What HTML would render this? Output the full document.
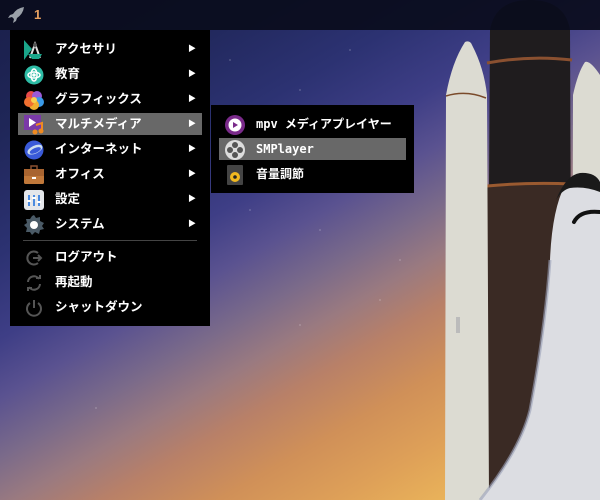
<!DOCTYPE html>
<html><head><meta charset="utf-8">
<style>
*{margin:0;padding:0;box-sizing:border-box}
body{width:600px;height:500px;overflow:hidden;position:relative;font-family:"Liberation Sans","Noto Sans CJK JP",sans-serif;
background:linear-gradient(150deg,#1a1f4a 0%,#1f2658 15%,#2c3272 30%,#3e3e86 40%,#5a5290 47%,#7a6a8a 54%,#9a7a80 60%,#b88068 66%,#d09058 74%,#dea058 82%,#eab45a 90%,#f2c460 100%);}
.bar{position:absolute;left:0;top:0;width:600px;height:30px;background:rgba(10,12,28,0.92)}
.bar .n{position:absolute;left:34px;top:7px;color:#e8a060;font-size:13px;font-weight:bold}
.menu{position:absolute;background:#000;color:#fff;font-weight:bold;font-size:12.5px}
.item{position:absolute;left:8px;height:22px;line-height:22px;width:184px}
.item .t{position:absolute;left:37px;top:0}
.item .a{position:absolute;right:6px;top:0;font-size:8px}
.item svg{position:absolute;left:6px;top:2px}
.hl{background:#686868}
.sub{font-family:"DejaVu Sans Mono","Noto Sans CJK JP",monospace;font-size:12px}
</style></head><body>
<svg style="position:absolute;left:0;top:0" width="600" height="500">
 <g fill="#fff" opacity="0.5"><circle cx="230" cy="60" r="0.6"/><circle cx="300" cy="90" r="0.6"/><circle cx="350" cy="50" r="0.6"/><circle cx="250" cy="210" r="0.6"/><circle cx="320" cy="230" r="0.6"/><circle cx="400" cy="260" r="0.6"/><circle cx="96" cy="408" r="0.6"/><circle cx="380" cy="300" r="0.6"/><circle cx="300" cy="325" r="0.6"/></g>
 <path d="M490 30 Q495 0 530 0 Q565 0 570 30 L572 500 L487 500 Z" fill="#1f1c1e"/>
 <path d="M487 186 Q530 182 572 184 L572 500 L487 500 Z" fill="#3a2a24"/>
 <path d="M487 186 Q530 182 572 184" stroke="#9a5a30" stroke-width="3" fill="none"/>
 <path d="M487 63 Q530 55 572 60" stroke="#8a5030" stroke-width="3" fill="none"/>
 <path d="M445 500 L446 95 Q452 62 465 42 Q470 40 472 45 Q484 68 487 95 L489 500 Z" fill="#dcdbd2"/>
 <path d="M446 96 Q466 90 486 98" stroke="#7a4a2a" stroke-width="1.5" fill="none"/>
 <rect x="456" y="317" width="4" height="16" fill="#bbb"/>
 <path d="M572 500 L573 95 Q578 72 585 62 Q590 60 600 75 L600 500 Z" fill="#dcdbd2"/>
 <path d="M600 180 Q578 172 565 185 Q552 210 550 260 Q545 330 530 410 Q520 450 480 500 L600 500 Z" fill="#dcdde2"/>
 <path d="M556 200 Q566 175 580 173 Q595 172 600 182 L600 192 Q585 186 570 188 Q562 190 556 200 Z" fill="#1a1a1a"/>
 <path d="M574 222 Q580 210 600 212" stroke="#111" stroke-width="4" fill="none" stroke-linecap="round"/>
 <path d="M550 260 Q545 330 530 410 Q520 450 480 500" stroke="#9aa0b8" stroke-width="3" fill="none" opacity="0.6"/>
</svg>
<div class="bar">
 <svg style="position:absolute;left:6px;top:5px" width="20" height="20" viewBox="0 0 20 20"><path d="M18 2 Q11 3 7 9 L4 10 L2 13 L6 12 L8 14 L7 18 L10 16 L11 13 Q17 9 18 2Z" fill="#9aa0a8"/></svg>
 <span class="n">1</span>
</div>
<div class="menu" style="left:10px;top:30px;width:200px;height:296px">
 <div class="item" style="top:8px"><svg width="20" height="20" viewBox="0 0 20 20"><path d="M0 0 L8 9 L0 20Z" fill="#1aa58a"/><path d="M6 18 L11 4 L16 18" stroke="#ddd" stroke-width="2" fill="none"/><circle cx="11" cy="5" r="2" fill="#555"/><path d="M4 14 L18 14 L15 19 L8 19Z" fill="#1aa58a"/></svg><span class="t">アクセサリ</span><span class="a">▶</span></div>
 <div class="item" style="top:33px"><svg width="20" height="20"><circle cx="10" cy="10" r="9.5" fill="#2ebca6"/><ellipse cx="10" cy="10" rx="6" ry="3" stroke="#fff" stroke-width="1.5" fill="none"/><ellipse cx="10" cy="10" rx="3" ry="6" stroke="#fff" stroke-width="1.5" fill="none"/><circle cx="10" cy="10" r="1.8" fill="#fff"/></svg><span class="t">教育</span><span class="a">▶</span></div>
 <div class="item" style="top:58px"><svg width="20" height="20"><circle cx="7" cy="6" r="5" fill="#e84a4a"/><circle cx="13" cy="6" r="5" fill="#9a5ad8"/><circle cx="15" cy="12" r="5" fill="#3a9ae8"/><circle cx="10" cy="15" r="5" fill="#f0b030"/><circle cx="5" cy="12" r="5" fill="#f07030"/><circle cx="10" cy="10" r="3" fill="#f8d050"/></svg><span class="t">グラフィックス</span><span class="a">▶</span></div>
 <div class="item hl" style="top:83px"><svg width="20" height="20"><rect x="0" y="0" width="17" height="15" fill="#7a3aa8"/><path d="M5 3 L12 7.5 L5 12Z" fill="#fff"/><path d="M12 10 L18 8 L18 16" stroke="#f08a20" stroke-width="2" fill="none"/><circle cx="11" cy="17" r="2.5" fill="#f08a20"/><circle cx="17" cy="16" r="2.5" fill="#f08a20"/></svg><span class="t">マルチメディア</span><span class="a">▶</span></div>
 <div class="item" style="top:108px"><svg width="20" height="20"><circle cx="10" cy="10" r="9.5" fill="#3a5ad8"/><ellipse cx="11" cy="10" rx="8" ry="4" fill="#cde" transform="rotate(-25 10 10)"/><ellipse cx="11" cy="11" rx="6" ry="2.5" fill="#3a5ad8" transform="rotate(-25 10 10)"/></svg><span class="t">インターネット</span><span class="a">▶</span></div>
 <div class="item" style="top:133px"><svg width="20" height="20"><rect x="7" y="1" width="6" height="4" stroke="#8a5030" stroke-width="1.5" fill="none"/><rect x="0" y="4" width="20" height="15" rx="1.5" fill="#c0783a"/><rect x="0" y="4" width="20" height="7" fill="#a86430"/><rect x="8" y="12" width="4" height="2" fill="#fff"/></svg><span class="t">オフィス</span><span class="a">▶</span></div>
 <div class="item" style="top:158px"><svg width="20" height="20"><rect x="0" y="0" width="20" height="20" rx="3" fill="#e4e6ea"/><g stroke="#4a8ae0" stroke-width="2"><line x1="5" y1="5" x2="5" y2="16"/><line x1="10" y1="5" x2="10" y2="16"/><line x1="15" y1="5" x2="15" y2="16"/></g><g fill="#fff"><rect x="3" y="10" width="4" height="2"/><rect x="8" y="7" width="4" height="2"/><rect x="13" y="11" width="4" height="2"/></g></svg><span class="t">設定</span><span class="a">▶</span></div>
 <div class="item" style="top:183px"><svg width="20" height="20" viewBox="0 0 20 20"><path d="M10 0 L12 3 L16 2 L16 6 L20 8 L18 11 L20 14 L16 15 L15 19 L11 17 L8 20 L6 17 L2 17 L3 13 L0 10 L3 8 L2 4 L6 4 L8 1Z" fill="#4a5a66"/><circle cx="10" cy="10" r="4" fill="#fff"/></svg><span class="t">システム</span><span class="a">▶</span></div>
 <div style="position:absolute;left:13px;top:210px;width:174px;height:1px;background:#444"></div>
 <div class="item" style="top:216px"><svg width="20" height="20"><path d="M14 5 A6.5 6.5 0 1 0 14 15" stroke="#555" stroke-width="2" fill="none"/><path d="M9 10 L17 10 M14 7 L17 10 L14 13" stroke="#555" stroke-width="2" fill="none"/></svg><span class="t">ログアウト</span></div>
 <div class="item" style="top:241px"><svg width="20" height="20"><path d="M4 9 A6 6 0 0 1 15 6" stroke="#555" stroke-width="2" fill="none"/><path d="M16 11 A6 6 0 0 1 5 14" stroke="#555" stroke-width="2" fill="none"/><path d="M12 5 L16 5 L16 2" stroke="#555" stroke-width="2" fill="none"/><path d="M8 15 L4 15 L4 18" stroke="#555" stroke-width="2" fill="none"/></svg><span class="t">再起動</span></div>
 <div class="item" style="top:266px"><svg width="20" height="20"><path d="M6 5 A7 7 0 1 0 14 5" stroke="#555" stroke-width="2" fill="none"/><line x1="10" y1="2" x2="10" y2="10" stroke="#555" stroke-width="2"/></svg><span class="t">シャットダウン</span></div>
</div>
<div class="menu sub" style="left:211px;top:105px;width:203px;height:88px">
 <div class="item" style="top:8px;width:187px"><svg width="20" height="20"><circle cx="10" cy="10" r="10" fill="#7a2a8a"/><circle cx="10" cy="10" r="6.5" fill="#fff"/><path d="M8 7 L13 10 L8 13Z" fill="#7a2a8a"/></svg><span class="t" style="left:37px">mpv メディアプレイヤー</span></div>
 <div class="item hl" style="top:33px;width:187px"><svg width="20" height="20"><circle cx="10" cy="10" r="10" fill="#ddd"/><g fill="#555"><circle cx="10" cy="5" r="3"/><circle cx="10" cy="15" r="3"/><circle cx="5" cy="10" r="3"/><circle cx="15" cy="10" r="3"/></g></svg><span class="t" style="left:37px">SMPlayer</span></div>
 <div class="item" style="top:58px;width:187px"><svg width="20" height="20"><rect x="2" y="0" width="16" height="20" rx="1" fill="#444"/><circle cx="10" cy="12" r="5" fill="#f0b820"/><circle cx="10" cy="12" r="1.8" fill="#222"/></svg><span class="t" style="left:37px">音量調節</span></div>
</div>
</body></html>
